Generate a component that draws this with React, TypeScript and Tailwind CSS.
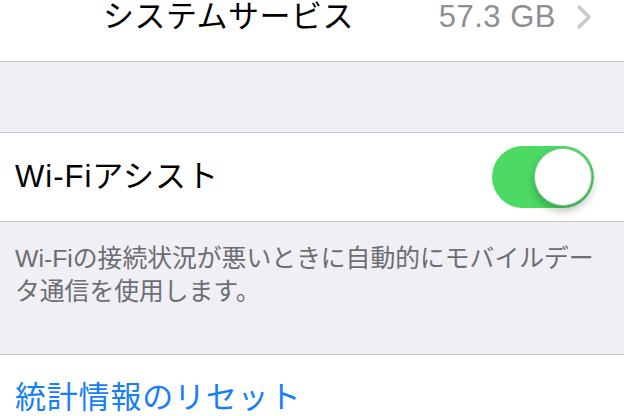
import React from 'react';

const font = { fontFamily: '"Liberation Sans", "Noto Sans CJK JP", sans-serif' };

// Gray chevron used on disclosure rows
const Chevron = () => (
  <svg width="16" height="26" viewBox="0 0 16 26" className="ml-[20px]">
    <path d="M3 3 L13 13 L3 23" fill="none" stroke="#c7c7cc" strokeWidth="3.2" strokeLinecap="round" strokeLinejoin="round" />
  </svg>
);

const Toggle = ({ on }: { on: boolean }) => (
  <div
    className={`relative w-[102px] h-[62px] rounded-full flex items-center ${
      on ? 'bg-[#4cd964] justify-end' : 'bg-white border-2 border-[#e5e5ea] justify-start'
    }`}
  >
    <div className="w-[58px] h-[58px] mr-[2px] rounded-full bg-white border border-[#3fa953]/60 shadow-[0_5px_8px_rgba(0,0,0,0.25)]" />
  </div>
);

export default function App() {
  return (
    <div className="w-[624px] h-[416px] overflow-hidden bg-[#efeff4]" style={font}>
      {/* storage row, scrolled partly off the top */}
      <div className="-mt-[27px] h-[89px] bg-white border-b border-[#c8c7cc] flex items-center pl-[103px] pr-[32px]">
        <span className="text-[31px] text-black tracking-[0.5px]">システムサービス</span>
        <span className="ml-auto text-[31px] text-[#8e8e93] tracking-[0.5px]">57.3 GB</span>
        <Chevron />
      </div>

      <div className="h-[70px]" />

      {/* Wi-Fi assist switch */}
      <div className="h-[90px] bg-white border-y border-[#c8c7cc] flex items-center pl-[15px] pr-[30px]">
        <span className="text-[31px] text-black tracking-[1px]">Wi-Fiアシスト</span>
        <div className="ml-auto">
          <Toggle on />
        </div>
      </div>

      <p className="px-[15px] pt-[20px] h-[132px] text-[24.8px] leading-[33px] text-[#6d6d72] whitespace-nowrap">
        Wi-Fiの接続状況が悪いときに自動的にモバイルデー
        <br />
        タ通信を使用します。
      </p>

      <div className="h-[89px] bg-white border-t border-[#c8c7cc] flex items-center pl-[15px]">
        <span className="text-[31px] text-[#157efb] tracking-[0.8px] mt-[-2px]">統計情報のリセット</span>
      </div>
    </div>
  );
}
